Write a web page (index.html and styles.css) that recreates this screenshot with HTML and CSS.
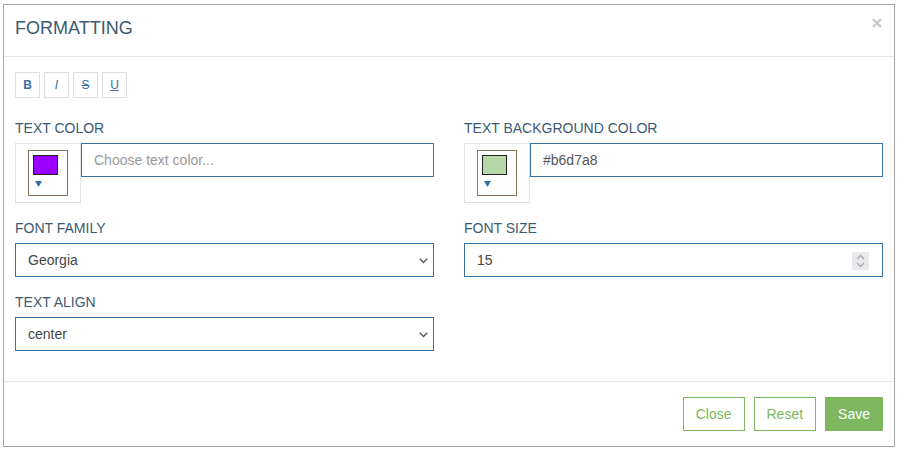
FILE: index.html
```html
<!DOCTYPE html>
<html>
<head>
<meta charset="utf-8">
<title>Formatting</title>
<link rel="stylesheet" href="styles.css">
</head>
<body>
<div class="page">
  <div class="dialog">
    <div class="header">
      <h4 class="title">FORMATTING</h4>
      <button class="close" aria-label="Close">
        <svg width="10" height="10" viewBox="0 0 10 10"><path d="M1 1L9 9M9 1L1 9" stroke="#c9c9c9" stroke-width="2.4"/></svg>
      </button>
    </div>
    <div class="body">
      <div class="toolbar">
        <button class="tb tb-b">B</button>
        <button class="tb tb-i">I</button>
        <button class="tb tb-s">S</button>
        <button class="tb tb-u">U</button>
      </div>
      <div class="grid">
        <div class="field">
          <label class="label">TEXT COLOR</label>
          <div class="color-row">
            <div class="picker">
              <div class="picker-inner">
                <span class="swatch swatch-purple"></span>
                <svg class="caret" width="7" height="6" viewBox="0 0 7 6"><path d="M0 0H7L3.5 6Z" fill="#3a6ea5"/></svg>
              </div>
            </div>
            <input class="input" type="text" placeholder="Choose text color...">
          </div>
        </div>
        <div class="field">
          <label class="label">TEXT BACKGROUND COLOR</label>
          <div class="color-row">
            <div class="picker">
              <div class="picker-inner">
                <span class="swatch swatch-green"></span>
                <svg class="caret" width="7" height="6" viewBox="0 0 7 6"><path d="M0 0H7L3.5 6Z" fill="#3a6ea5"/></svg>
              </div>
            </div>
            <input class="input" type="text" value="#b6d7a8">
          </div>
        </div>
        <div class="field">
          <label class="label">FONT FAMILY</label>
          <div class="select-wrap">
            <select class="select"><option>Georgia</option></select>
            <svg class="chev" width="9" height="6" viewBox="0 0 9 6"><path d="M0.8 0.8L4.5 4.6L8.2 0.8" fill="none" stroke="#555" stroke-width="1.4"/></svg>
          </div>
        </div>
        <div class="field">
          <label class="label">FONT SIZE</label>
          <div class="num-wrap">
            <input class="num-input" type="text" value="15">
            <span class="spinner">
              <svg width="17" height="18" viewBox="0 0 17 18"><path d="M5 7L8.5 3.5L12 7M5 11L8.5 14.5L12 11" fill="none" stroke="#a2a2aa" stroke-width="1.2"/></svg>
            </span>
          </div>
        </div>
        <div class="field">
          <label class="label">TEXT ALIGN</label>
          <div class="select-wrap">
            <select class="select"><option>center</option></select>
            <svg class="chev" width="9" height="6" viewBox="0 0 9 6"><path d="M0.8 0.8L4.5 4.6L8.2 0.8" fill="none" stroke="#555" stroke-width="1.4"/></svg>
          </div>
        </div>
      </div>
    </div>
    <div class="footer">
      <button class="btn">Close</button>
      <button class="btn">Reset</button>
      <button class="btn btn-save">Save</button>
    </div>
  </div>
</div>
</body>
</html>
```
FILE: styles.css
```css
* { box-sizing: border-box; }
body {
  margin: 0;
  background: #fff;
  font-family: "Liberation Sans", Arial, sans-serif;
}
.page { padding: 4px 0 0 3px; }
.dialog {
  width: 892px;
  border: 1px solid #a3a3a3;
  background: #fff;
}
.header {
  display: flex;
  justify-content: space-between;
  align-items: flex-start;
  height: 52px;
  padding: 13px 11px 0 11px;
  border-bottom: 1px solid #e5e5e5;
}
.title {
  margin: 0;
  font-size: 18px;
  line-height: 20px;
  font-weight: normal;
  color: #3c5a71;
}
.close {
  border: 0;
  background: none;
  padding: 0;
  margin: 0 1px 0 0;
  width: 10px;
  height: 10px;
  display: block;
}
.close svg { display: block; }
.body { padding: 15px 11px 30px 11px; }
.toolbar { display: flex; gap: 4px; }
.tb {
  width: 25px;
  height: 26px;
  border: 1px solid #dedede;
  background: #fff;
  color: #3a6ea5;
  font-family: "Liberation Sans", Arial, sans-serif;
  font-size: 12px;
  padding: 0;
}
.tb-b { font-weight: bold; }
.tb-i { font-style: italic; }
.tb-s { text-decoration: line-through; }
.tb-u { text-decoration: underline; }
.grid {
  margin-top: 20px;
  display: grid;
  grid-template-columns: 419px 419px;
  column-gap: 30px;
  row-gap: 15px;
}
.label {
  display: block;
  font-size: 14px;
  line-height: 20px;
  margin-bottom: 5px;
  color: #3c5a71;
}
.color-row { display: flex; align-items: flex-start; }
.picker {
  width: 66px;
  height: 60px;
  flex: none;
  border: 1px solid #e2e2e2;
  padding: 6px 0 0 12px;
}
.picker-inner {
  width: 40px;
  height: 46px;
  border: 1px solid #8c755a;
  padding: 4px 0 0 4px;
}
.swatch {
  display: block;
  width: 25px;
  height: 20px;
  border: 1px solid #222;
}
.swatch-purple { background: #9900ff; }
.swatch-green { background: #b6d7a8; }
.caret {
  display: block;
  margin: 6px 0 0 2px;
}
.input {
  flex: 1;
  min-width: 0;
  height: 34px;
  border: 1px solid #3571a6;
  padding: 0 12px;
  font-family: "Liberation Sans", Arial, sans-serif;
  font-size: 14px;
  color: #555;
  outline: none;
  border-radius: 0;
}
.input::placeholder { color: #999; }
.select-wrap {
  display: flex;
  align-items: center;
  height: 34px;
  border: 1px solid #3571a6;
  padding: 0 5px 0 12px;
}
.select {
  flex: 1;
  appearance: none;
  -webkit-appearance: none;
  border: 0;
  background: transparent;
  font-family: "Liberation Sans", Arial, sans-serif;
  font-size: 14px;
  color: #444;
  padding: 0;
  outline: none;
  height: 100%;
}
.chev { display: block; margin-top: 1px; }
.num-wrap {
  display: flex;
  align-items: center;
  height: 34px;
  border: 1px solid #3571a6;
  padding: 0 13px 0 12px;
}
.num-input {
  flex: 1;
  min-width: 0;
  border: 0;
  padding: 0;
  font-family: "Liberation Sans", Arial, sans-serif;
  font-size: 14px;
  color: #444;
  outline: none;
  height: 100%;
}
.spinner {
  display: block;
  width: 17px;
  height: 18px;
  background: #e9e9ed;
  margin-top: 1px;
}
.spinner svg { display: block; }
.footer {
  border-top: 1px solid #e5e5e5;
  padding: 15px 11px;
  display: flex;
  justify-content: flex-end;
  gap: 9px;
}
.btn {
  height: 34px;
  padding: 0 12px;
  border: 1px solid #7cb85c;
  background: #fff;
  color: #7cb85c;
  font-family: "Liberation Sans", Arial, sans-serif;
  font-size: 14px;
  border-radius: 0;
}
.btn-save {
  background: #7db75f;
  color: #fff;
}
```
